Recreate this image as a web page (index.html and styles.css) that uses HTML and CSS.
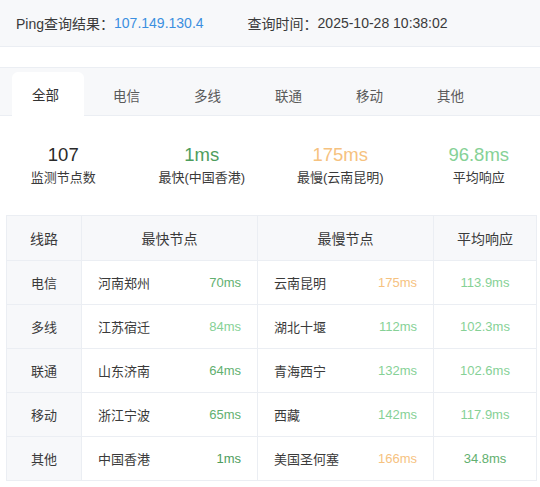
FILE: index.html
```html
<!DOCTYPE html>
<html lang="zh">
<head>
<meta charset="utf-8">
<title>Ping查询结果</title>
<link rel="stylesheet" href="styles.css">
</head>
<body>
<header class="topbar">
  <span class="label">Ping查询结果：</span><span class="ip">107.149.130.4</span>
  <span class="label time-label">查询时间：</span><span class="time">2025-10-28 10:38:02</span>
</header>
<div class="spacer"></div>
<nav class="tabs">
  <div class="tab active">全部</div>
  <div class="tab">电信</div>
  <div class="tab">多线</div>
  <div class="tab">联通</div>
  <div class="tab">移动</div>
  <div class="tab">其他</div>
</nav>
<section class="stats">
  <div class="stat"><div class="num dark">107</div><div class="cap">监测节点数</div></div>
  <div class="stat"><div class="num g1">1ms</div><div class="cap">最快(中国香港)</div></div>
  <div class="stat"><div class="num org">175ms</div><div class="cap">最慢(云南昆明)</div></div>
  <div class="stat"><div class="num g3">96.8ms</div><div class="cap">平均响应</div></div>
</section>
<div class="table">
  <div class="row head">
    <div class="cell c1">线路</div>
    <div class="cell c2 center">最快节点</div>
    <div class="cell c3 center">最慢节点</div>
    <div class="cell c4">平均响应</div>
  </div>
  <div class="row">
    <div class="cell c1">电信</div>
    <div class="cell c2"><span>河南郑州</span><span class="g2">70ms</span></div>
    <div class="cell c3"><span>云南昆明</span><span class="org">175ms</span></div>
    <div class="cell c4 g3">113.9ms</div>
  </div>
  <div class="row">
    <div class="cell c1">多线</div>
    <div class="cell c2"><span>江苏宿迁</span><span class="g3">84ms</span></div>
    <div class="cell c3"><span>湖北十堰</span><span class="g3">112ms</span></div>
    <div class="cell c4 g3">102.3ms</div>
  </div>
  <div class="row">
    <div class="cell c1">联通</div>
    <div class="cell c2"><span>山东济南</span><span class="g2">64ms</span></div>
    <div class="cell c3"><span>青海西宁</span><span class="g3">132ms</span></div>
    <div class="cell c4 g3">102.6ms</div>
  </div>
  <div class="row">
    <div class="cell c1">移动</div>
    <div class="cell c2"><span>浙江宁波</span><span class="g2">65ms</span></div>
    <div class="cell c3"><span>西藏</span><span class="g3">142ms</span></div>
    <div class="cell c4 g3">117.9ms</div>
  </div>
  <div class="row">
    <div class="cell c1">其他</div>
    <div class="cell c2"><span>中国香港</span><span class="g1">1ms</span></div>
    <div class="cell c3"><span>美国圣何塞</span><span class="org">166ms</span></div>
    <div class="cell c4 g2">34.8ms</div>
  </div>
</div>
</body>
</html>
```

FILE: styles.css
```css
* { box-sizing: border-box; }
html, body { margin: 0; padding: 0; background: #fff; }
body {
  width: 540px;
  overflow: hidden;
  font-family: "Liberation Sans", "Noto Sans CJK SC", sans-serif;
  color: #3a3a3a;
  font-size: 14px;
}
.topbar {
  height: 47px;
  background: #f7f8fa;
  border-bottom: 1px solid #ebeef3;
  padding: 0 16px;
  display: flex;
  align-items: center;
  white-space: nowrap;
}
.label { color: #3a3a3a; }
.ip { color: #3b8fe0; }
.time-label { margin-left: 44px; }
.time { color: #3a3a3a; }
.spacer { height: 20px; }
.tabs {
  height: 49px;
  background: #f7f8fa;
  border-top: 1px solid #ebeef3;
  border-bottom: 1px solid #ebeef3;
  display: flex;
  align-items: flex-end;
  padding-left: 12px;
  gap: 9px;
}
.tab {
  width: 72px;
  height: 43px;
  padding-left: 20px;
  display: flex;
  align-items: center;
  font-size: 13.5px;
  color: #5a5a5a;
  margin-bottom: -1px;
}
.tab.active {
  background: #fff;
  color: #333;
  border-radius: 6px 6px 0 0;
  height: 44px;
}
.stats {
  display: grid;
  grid-template-columns: repeat(4, 1fr);
  margin: 0 -8px 0 -6px;
  height: 99px;
  padding-top: 27px;
}
.stat { text-align: center; }
.num { font-size: 18.5px; line-height: 24px; }
.cap { font-size: 13px; line-height: 18px; margin-top: 2px; color: #3a3a3a; }
.dark { color: #2a2a2a; }
.g1 { color: #4e9d5d; }
.g2 { color: #62b070; }
.g3 { color: #86d196; }
.org { color: #f6c27f; }
.table {
  margin-left: 6px;
  width: 531px;
  border-top: 1px solid #ebeef3;
  border-left: 1px solid #ebeef3;
  border-right: 1px solid #ebeef3;
}
.row {
  display: grid;
  grid-template-columns: 75px 176px 176px 1fr;
  height: 44px;
  border-bottom: 1px solid #ebeef3;
  font-size: 13px;
}
.row.head { height: 45px; background: #f7f8fa; font-size: 14px; }
.cell {
  display: flex;
  align-items: center;
  padding: 0 16px;
  border-right: 1px solid #ebeef3;
}
.cell:last-child { border-right: none; }
.c1 { justify-content: center; background: #f7f8fa; padding: 0; }
.c2, .c3 { justify-content: space-between; }
.center { justify-content: center; }
.c4 { justify-content: center; }
```
